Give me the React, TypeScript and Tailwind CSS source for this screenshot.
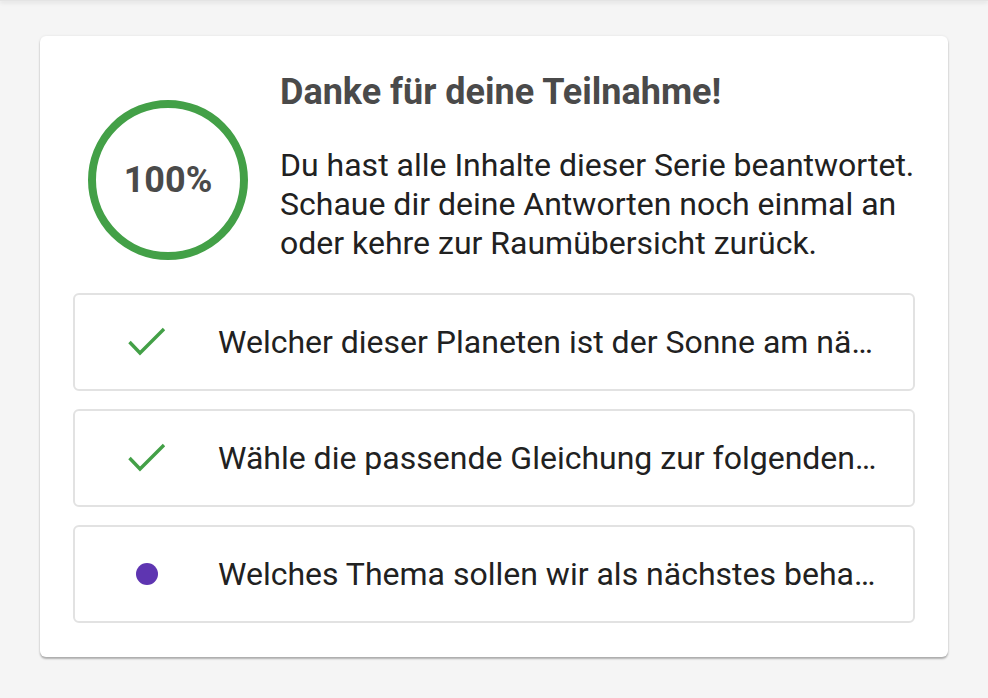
import React from "react";

type Item = {
  id: number;
  title: string;
  done: boolean;
};

const items: Item[] = [
  { id: 1, title: "Welcher dieser Planeten ist der Sonne am nächsten?", done: true },
  { id: 2, title: "Wähle die passende Gleichung zur folgenden Grafik aus.", done: true },
  { id: 3, title: "Welches Thema sollen wir als nächstes behandeln?", done: false },
];

function ProgressRing({ percent }: { percent: number }) {
  return (
    <div className="relative ml-[15px] mt-[28px] h-[160px] w-[160px] shrink-0">
      <svg width="160" height="160" viewBox="0 0 160 160">
        <circle cx="80" cy="80" r="76" fill="none" stroke="#43a047" strokeWidth="8" />
      </svg>
      <div className="absolute inset-0 flex items-center justify-center text-[36px] font-bold text-[#4a4a4a]">
        {percent}%
      </div>
    </div>
  );
}

function CheckIcon() {
  return (
    <svg width="40" height="30" viewBox="0 0 40 30">
      <polyline
        points="2.5,15 13,26 37,2"
        fill="none"
        stroke="#43a047"
        strokeWidth="3.4"
      />
    </svg>
  );
}

export default function App() {
  return (
    <div className="min-h-screen bg-[#f5f5f5] font-['Roboto',sans-serif]">
      <div className="h-px bg-[#e4e4e4] shadow-[0_1px_4px_rgba(0,0,0,0.25)]" />
      <div className="px-[40px] pt-[35px]">
        <div className="rounded-[6px] bg-white px-[33px] pb-[34px] pt-[36px] shadow-[0_2px_2px_rgba(0,0,0,0.28),0_0_3px_rgba(0,0,0,0.08)]">
          <div className="flex gap-[32px]">
            <ProgressRing percent={100} />
            <div className="-mr-[10px] min-w-0 flex-1">
              <h1 className="text-[36px] font-bold leading-[40px] text-[#4a4a4a]">Danke für deine Teilnahme!</h1>
              <p className="mt-[34px] text-[32px] leading-[39px] text-[#212121]">
                Du hast alle Inhalte dieser Serie beantwortet. Schaue dir deine Antworten noch einmal an oder kehre
                zur Raumübersicht zurück.
              </p>
            </div>
          </div>

          <div className="mt-[30px] flex flex-col gap-[18px]">
            {items.map((item) => (
              <div
                key={item.id}
                className="flex h-[98px] min-w-0 items-center rounded-[6px] border-2 border-[#e2e2e2] pr-[36px]"
              >
                <div className="flex w-[143px] shrink-0 items-center justify-center">
                  {item.done ? <CheckIcon /> : <span className="block h-[22px] w-[22px] rounded-full bg-[#5e35b1]" />}
                </div>
                <div className="min-w-0 flex-1 truncate text-[32px] text-[#212121]">{item.title}</div>
              </div>
            ))}
          </div>
        </div>
      </div>
    </div>
  );
}
